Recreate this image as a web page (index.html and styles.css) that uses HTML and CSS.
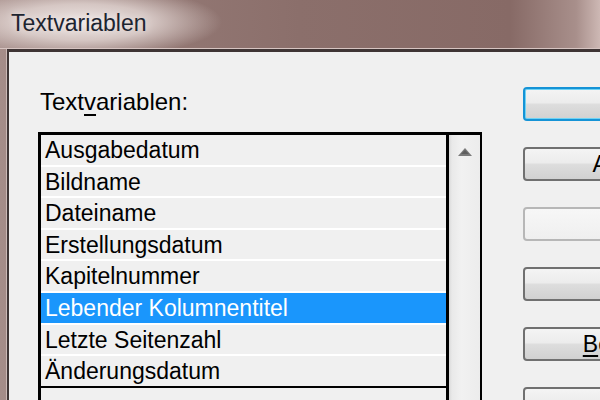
FILE: index.html
```html
<!DOCTYPE html>
<html lang="de">
<head>
<meta charset="utf-8">
<title>Textvariablen</title>
<link rel="stylesheet" href="styles.css">
</head>
<body>
<div class="window">
  <div class="titlebar"><span class="title">Textvariablen</span></div>
  <div class="frame">
    <div class="client">
      <div class="left">
        <div class="label">Text<u>v</u>ariablen:</div>
        <div class="listbox">
          <ul class="items">
            <li class="item">Ausgabedatum</li>
            <li class="item">Bildname</li>
            <li class="item">Dateiname</li>
            <li class="item">Erstellungsdatum</li>
            <li class="item">Kapitelnummer</li>
            <li class="item selected">Lebender Kolumnentitel</li>
            <li class="item">Letzte Seitenzahl</li>
            <li class="item last">Änderungsdatum</li>
            <li class="item empty"></li>
          </ul>
          <div class="scrollbar">
            <svg class="arrow" width="14" height="8" viewBox="0 0 14 8"><polygon points="7,0 14,8 0,8" fill="#7a7a7a"/><polygon points="7,2 11,6 3,6" fill="#5e5e5e"/></svg>
          </div>
        </div>
      </div>
      <div class="buttons">
        <div class="btn default">Fertig</div>
        <div class="btn">Abbrechen</div>
        <div class="btn disabled">Einfügen</div>
        <div class="btn">Neu...</div>
        <div class="btn"><u>B</u>earbeiten...</div>
        <div class="btn">Löschen</div>
      </div>
    </div>
  </div>
</div>
</body>
</html>
```
FILE: styles.css
```css
html, body {
  margin: 0;
  padding: 0;
}
body {
  width: 600px;
  height: 400px;
  overflow: hidden;
  font-family: "Liberation Sans", Arial, sans-serif;
  background: linear-gradient(90deg, #a58d89 0%, #957a76 20%, #8b6f6b 50%, #876a66 85%, #a88f8b 96%, #cdb8b4 100%);
}
.window {
  display: flex;
  flex-direction: column;
  height: 400px;
}
.titlebar {
  flex: none;
  height: 49px;
  padding: 8px 0 0 11px;
  box-sizing: border-box;
  border-bottom: 1px solid #d6c4c1;
  background: radial-gradient(ellipse 140px 36px at 82px 22px, rgba(240,232,230,0.97) 0%, rgba(228,216,213,0.8) 50%, rgba(200,184,181,0) 100%);
}
.title {
  font-size: 23px;
  line-height: 30px;
  color: #1d2430;
  text-shadow: 0 0 8px rgba(255,255,255,0.7);
}
.frame {
  flex: 1;
  min-height: 0;
  display: flex;
  padding-left: 7px;
}
.client {
  flex: 1;
  display: flex;
  align-items: flex-start;
  overflow: hidden;
  background: #f0f0f0;
  border-top: 3px solid #3f3535;
  border-left: 2px solid #3f3535;
  box-shadow: -1px 0 0 #cbb8b5;
}
.left {
  flex: none;
  padding: 36px 0 0 29px;
}
.label {
  margin-left: 2px;
  font-size: 24px;
  line-height: 28px;
  color: #000;
}
.label u {
  text-underline-offset: 4px;
  text-decoration-thickness: 2px;
}
.listbox {
  margin-top: 16px;
  display: flex;
  border-top: 3px solid #000;
  border-left: 3px solid #000;
  border-right: 2px solid #000;
}
.items {
  list-style: none;
  margin: 0;
  padding: 0;
  width: 405px;
  border-right: 3px solid #000;
}
.item {
  height: 29.6px;
  line-height: 30px;
  padding-left: 4px;
  font-size: 23px;
  color: #000;
  background: #f0f0f0;
  border-bottom: 2px solid #ffffff;
  white-space: nowrap;
  overflow: hidden;
}
.item.selected {
  background: #1a96fc;
  color: #fff;
}
.item.last {
  border-bottom: 2px solid #000;
}
.item.empty {
  border-bottom: none;
}
.scrollbar {
  width: 31px;
  display: flex;
  justify-content: center;
  align-items: flex-start;
  background: linear-gradient(90deg, #d9d9d9 0px, #e9e9e9 3px, #f1f1f1 40%, #ececec 100%);
}
.arrow {
  margin-top: 13px;
  margin-left: 1px;
}
.buttons {
  flex: none;
  width: 250px;
  margin-left: 41px;
  padding-top: 35px;
  display: flex;
  flex-direction: column;
  gap: 26px;
}
.btn {
  height: 30px;
  line-height: 30px;
  border: 2px solid #707070;
  border-radius: 4px;
  background: linear-gradient(180deg, #f4f4f4 0%, #ececec 45%, #dddddd 52%, #d1d1d1 100%);
  text-align: center;
  font-size: 23px;
  color: #000;
  white-space: nowrap;
}
.btn u {
  text-underline-offset: 3px;
  text-decoration-thickness: 2px;
}
.btn.default {
  border-color: #1593d6;
  box-shadow: inset 0 0 0 1px #6fd3f5;
}
.btn.disabled {
  border-color: #b7b7b7;
  background: linear-gradient(180deg, #f7f7f7 0%, #f3f3f3 50%, #efefef 100%);
  color: #a0a0a0;
}
```
